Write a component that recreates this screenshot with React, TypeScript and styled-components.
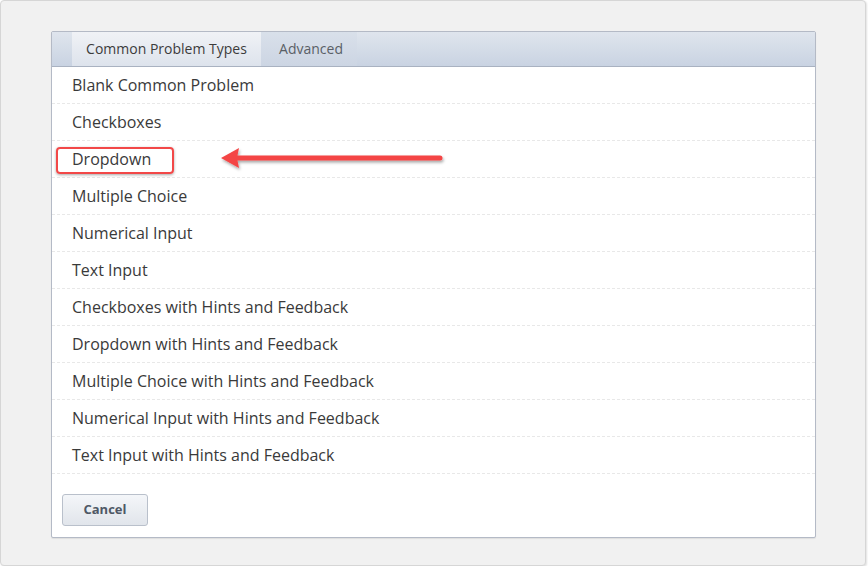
import React from "react";
import styled, { createGlobalStyle } from "styled-components";

const Global = createGlobalStyle`
  html, body { margin: 0; padding: 0; background: #ffffff; }
  body { font-family: "Open Sans", "Noto Sans", sans-serif; }
  * { box-sizing: border-box; }
`;

const Frame = styled.div`
  width: 866px;
  height: 566px;
  background: #f1f1f1;
  border: 1px solid #d6d6d6;
  border-radius: 4px;
  box-shadow: 1px 1px 2px rgba(0,0,0,0.12);
  padding: 30px 49px 0 50px;
`;

const Panel = styled.div`
  background: #ffffff;
  border: 1px solid #b4bac6;
  border-radius: 2px;
  box-shadow: 0 1px 1px rgba(0,0,0,0.08);
  display: flex;
  flex-direction: column;
`;

const TabBar = styled.div`
  flex: 0 0 35px;
  height: 35px;
  display: flex;
  padding-left: 20px;
  background: linear-gradient(#dfe5ed, #c9d3e2);
  border-bottom: 1px solid #a9b2c1;
`;

const Tab = styled.div<{ $active?: boolean; $w: number }>`
  width: ${p => p.$w}px;
  display: flex;
  align-items: center;
  justify-content: center;
  padding-bottom: 2px;
  padding-left: ${p => (p.$active ? 0 : 4)}px;
  font-size: 14px;
  color: ${p => (p.$active ? "#3c3c3c" : "#5a5f66")};
  background: ${p => (p.$active ? "linear-gradient(#f0f2f6, #dde3ec)" : "linear-gradient(#d9e0ea, #ccd5e3)")};
`;

const List = styled.div`
  display: flex;
  flex-direction: column;
`;

const Row = styled.div`
  flex: 0 0 37px;
  height: 37px;
  display: flex;
  align-items: center;
  padding-left: 20px;
  padding-bottom: 1px;
  font-size: 16px;
  color: #3a3a3a;
  border-bottom: 1px dashed #e8e8e8;
  position: relative;
`;

const Footer = styled.div`
  padding: 20px 10px 11px;
`;

const CancelButton = styled.button`
  display: block;
  width: 86px;
  height: 32px;
  border: 1px solid #b9c0cb;
  border-radius: 3px;
  background: linear-gradient(#f4f6f9, #e1e5eb);
  font-family: "Open Sans", "Noto Sans", sans-serif;
  font-weight: 700;
  font-size: 13px;
  color: #4f5866;
  padding: 0 0 2px;
`;

const Highlight = styled.div`
  position: absolute;
  left: 4px;
  top: 6px;
  width: 118px;
  height: 27px;
  border: 2.5px solid #f24848;
  border-radius: 4px;
  box-shadow: 0 1px 3px rgba(0,0,0,0.35);
  pointer-events: none;
`;

const Arrow = styled.svg`
  position: absolute;
  left: 169px;
  top: 4px;
  overflow: visible;
`;

const items = [
  "Blank Common Problem",
  "Checkboxes",
  "Dropdown",
  "Multiple Choice",
  "Numerical Input",
  "Text Input",
  "Checkboxes with Hints and Feedback",
  "Dropdown with Hints and Feedback",
  "Multiple Choice with Hints and Feedback",
  "Numerical Input with Hints and Feedback",
  "Text Input with Hints and Feedback",
];

export default function App() {
  return (
    <>
      <Global />
      <Frame>
        <Panel>
          <TabBar>
            <Tab $active $w={189}>Common Problem Types</Tab>
            <Tab $w={96}>Advanced</Tab>
          </TabBar>
          <List>
            {items.map(t => (
              <Row key={t}>
                {t}
                {t === "Dropdown" && (
                  <>
                    <Highlight />
                    <Arrow width="225" height="26" viewBox="0 0 225 26">
                      <defs>
                        <filter id="sh" x="-10%" y="-50%" width="120%" height="200%">
                          <feDropShadow dx="1" dy="2" stdDeviation="1.5" floodColor="#000" floodOpacity="0.35" />
                        </filter>
                      </defs>
                      <g filter="url(#sh)">
                        <line x1="14" y1="13" x2="219" y2="13" stroke="#f44545" strokeWidth="5" strokeLinecap="round" />
                        <polygon points="0,13 18,3 16,13 18,23" fill="#f44545" />
                      </g>
                    </Arrow>
                  </>
                )}
              </Row>
            ))}
          </List>
          <Footer>
            <CancelButton>Cancel</CancelButton>
          </Footer>
        </Panel>
      </Frame>
    </>
  );
}
